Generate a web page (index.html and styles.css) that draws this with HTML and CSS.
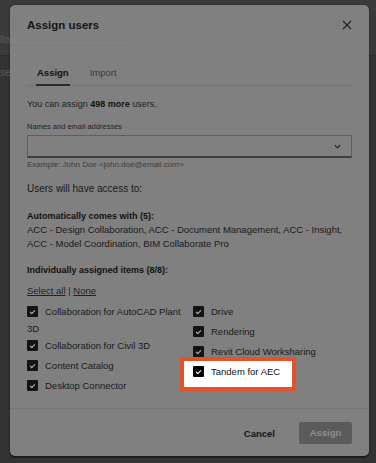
FILE: index.html
```html
<!DOCTYPE html>
<html lang="en">
<head>
  <meta charset="UTF-8">
  <meta name="viewport" content="width=device-width, initial-scale=1.0">
  <title>Assign users</title>
  <link rel="stylesheet" href="styles.css">
</head>
<body>
  <div class="page">
    <div class="page-head"><span>lla</span></div>
    <div class="page-row"><span>se</span></div>
  </div>

  <div class="modal">
    <div class="modal-head">
      <h2>Assign users</h2>
      <span class="close">
        <svg viewBox="0 0 10 10" width="10" height="10">
          <path d="M1 1L9 9M9 1L1 9" />
        </svg>
      </span>
    </div>
    <div class="ghost-line"></div>

    <div class="tabs">
      <span class="tab active">Assign</span>
      <span class="tab">Import</span>
    </div>

    <div class="modal-body">
      <p class="seats">You can assign <strong>498 more</strong> users.</p>

      <label class="field-label">Names and email addresses</label>
      <div class="field">
        <svg viewBox="0 0 8 5" width="7" height="5" class="chevron">
          <path d="M1 1l3 3 3-3" />
        </svg>
      </div>
      <p class="hint">Example: John Doe &lt;john.doe@email.com&gt;</p>

      <p class="access">Users will have access to:</p>

      <p class="group-title">Automatically comes with (5):</p>
      <p class="group-text">ACC - Design Collaboration, ACC - Document Management, ACC - Insight, ACC - Model Coordination, BIM Collaborate Pro</p>

      <p class="group-title items-title">Individually assigned items (8/8):</p>
      <p class="select"><a>Select all</a> | <a>None</a></p>

      <div class="items">
        <div class="col">
          <div class="item"><span class="box"></span>Collaboration for AutoCAD Plant 3D</div>
          <div class="item"><span class="box"></span>Collaboration for Civil 3D</div>
          <div class="item"><span class="box"></span>Content Catalog</div>
          <div class="item"><span class="box"></span>Desktop Connector</div>
        </div>
        <div class="col">
          <div class="item"><span class="box"></span>Drive</div>
          <div class="item"><span class="box"></span>Rendering</div>
          <div class="item"><span class="box"></span>Revit Cloud Worksharing</div>
          <div class="item highlight"><span class="box"></span>Tandem for AEC</div>
        </div>
      </div>
    </div>

    <div class="modal-foot">
      <span class="btn-cancel">Cancel</span>
      <span class="btn-assign">Assign</span>
    </div>
  </div>
</body>
</html>
```

FILE: styles.css
```css
body {
  margin: 0;
  padding: 0;
  font-family: "Liberation Sans", Arial, sans-serif;
  background-color: #333;
  color: #111;
  height: 463px;
  overflow: hidden;
}

.page-head {
  height: 56px;
  background-color: #3a3a3a;
  border-bottom: 1px solid #2b2b2b;
  color: #5c5c5c;
  font-size: 10px;
  padding-top: 34px;
  box-sizing: border-box;
}

.page-row {
  color: #5c5c5c;
  font-size: 10px;
  padding-top: 11px;
}

.modal {
  position: absolute;
  top: 5px;
  left: 10px;
  width: 359px;
  background-color: #808080;
  border-radius: 5px;
  box-shadow: 0 2px 0 #1c1c1c, 0 0 2px #1c1c1c;
}

.modal-head {
  display: flex;
  justify-content: space-between;
  align-items: center;
  padding: 13px 17px 0 17px;
}

.modal-head h2 {
  margin: 0;
  font-size: 11.5px;
  line-height: 14px;
  font-weight: bold;
  color: #151515;
}

.close svg {
  display: block;
  stroke: #222;
  stroke-width: 1.2;
  fill: none;
}

.ghost-line {
  height: 1px;
  width: 120px;
  margin-top: 13px;
  background-color: #7a7a7a;
}

.tabs {
  display: flex;
  gap: 19px;
  margin: 20px 17px 0 17px;
  padding-left: 9px;
  border-bottom: 1px solid #747474;
  font-size: 9.5px;
  line-height: 14px;
}

.tab {
  color: #3a3a3a;
  padding: 0 1px 4px 1px;
  border-bottom: 2px solid transparent;
  margin-bottom: -1px;
}

.tab.active {
  color: #111;
  font-weight: bold;
  border-bottom-color: #2a2a2a;
}

.modal-body {
  padding: 0 17px;
}

p {
  margin: 0;
}

.seats {
  margin-top: 11px;
  font-size: 9px;
  line-height: 14px;
  color: #222;
}

.seats strong {
  color: #111;
}

.field-label {
  display: block;
  margin-top: 11px;
  font-size: 7.5px;
  line-height: 10px;
  color: #222;
}

.field {
  margin-top: 3px;
  height: 20px;
  border: 1px solid #5e5e5e;
  border-bottom: 2px solid #3e3e3e;
  display: flex;
  justify-content: flex-end;
  align-items: center;
  padding-right: 10px;
}

.chevron {
  stroke: #1a1a1a;
  stroke-width: 1.3;
  fill: none;
}

.hint {
  margin-top: 1px;
  font-size: 8px;
  line-height: 12px;
  color: #3c3c3c;
}

.access {
  margin-top: 11px;
  font-size: 10px;
  line-height: 14px;
  color: #1a1a1a;
}

.group-title {
  margin-top: 14px;
  font-size: 9px;
  line-height: 13px;
  font-weight: bold;
  color: #111;
}

.group-text {
  font-size: 9.5px;
  line-height: 13.5px;
  color: #1a1a1a;
}

.items-title {
  margin-top: 14px;
}

.select {
  margin-top: 7px;
  font-size: 9.5px;
  line-height: 13px;
  color: #222;
}

.select a {
  text-decoration: underline;
}

.items {
  display: grid;
  grid-template-columns: 166px 1fr;
  margin-top: 5px;
  font-size: 9.5px;
  line-height: 14px;
  color: #1a1a1a;
}

.item {
  min-height: 20px;
}

.box {
  display: inline-block;
  vertical-align: middle;
  width: 11px;
  height: 11px;
  margin: 4px 7px 5px 0;
  background-color: #141414;
  border-radius: 1px;
  position: relative;
}

/* small tick inside the box */
.box::after {
  content: "";
  position: absolute;
  left: 4px;
  top: 2.5px;
  width: 2px;
  height: 4px;
  border-right: 1px solid #bbb;
  border-bottom: 1px solid #bbb;
  transform: rotate(45deg);
}

.highlight {
  position: relative;
  z-index: 1;
  color: #111;
}

.highlight::before {
  content: "";
  position: absolute;
  z-index: -1;
  left: -13px;
  top: -5px;
  width: 108px;
  height: 26px;
  background-color: #fff;
  border: 4px solid #e2532a;
}

.highlight .box {
  background-color: #000;
}

.highlight .box::after {
  border-color: #fff;
}

.modal-foot {
  margin-top: 12px;
  border-top: 1px solid #767676;
  display: flex;
  justify-content: flex-end;
  align-items: center;
  gap: 24px;
  padding: 13px 17px 12px 17px;
  font-size: 9.5px;
}

.btn-cancel {
  font-weight: bold;
  color: #151515;
}

.btn-assign {
  width: 53px;
  height: 22px;
  line-height: 22px;
  text-align: center;
  background-color: #5b5b5b;
  color: #8e8e8e;
  font-weight: bold;
  border-radius: 2px;
}
```
